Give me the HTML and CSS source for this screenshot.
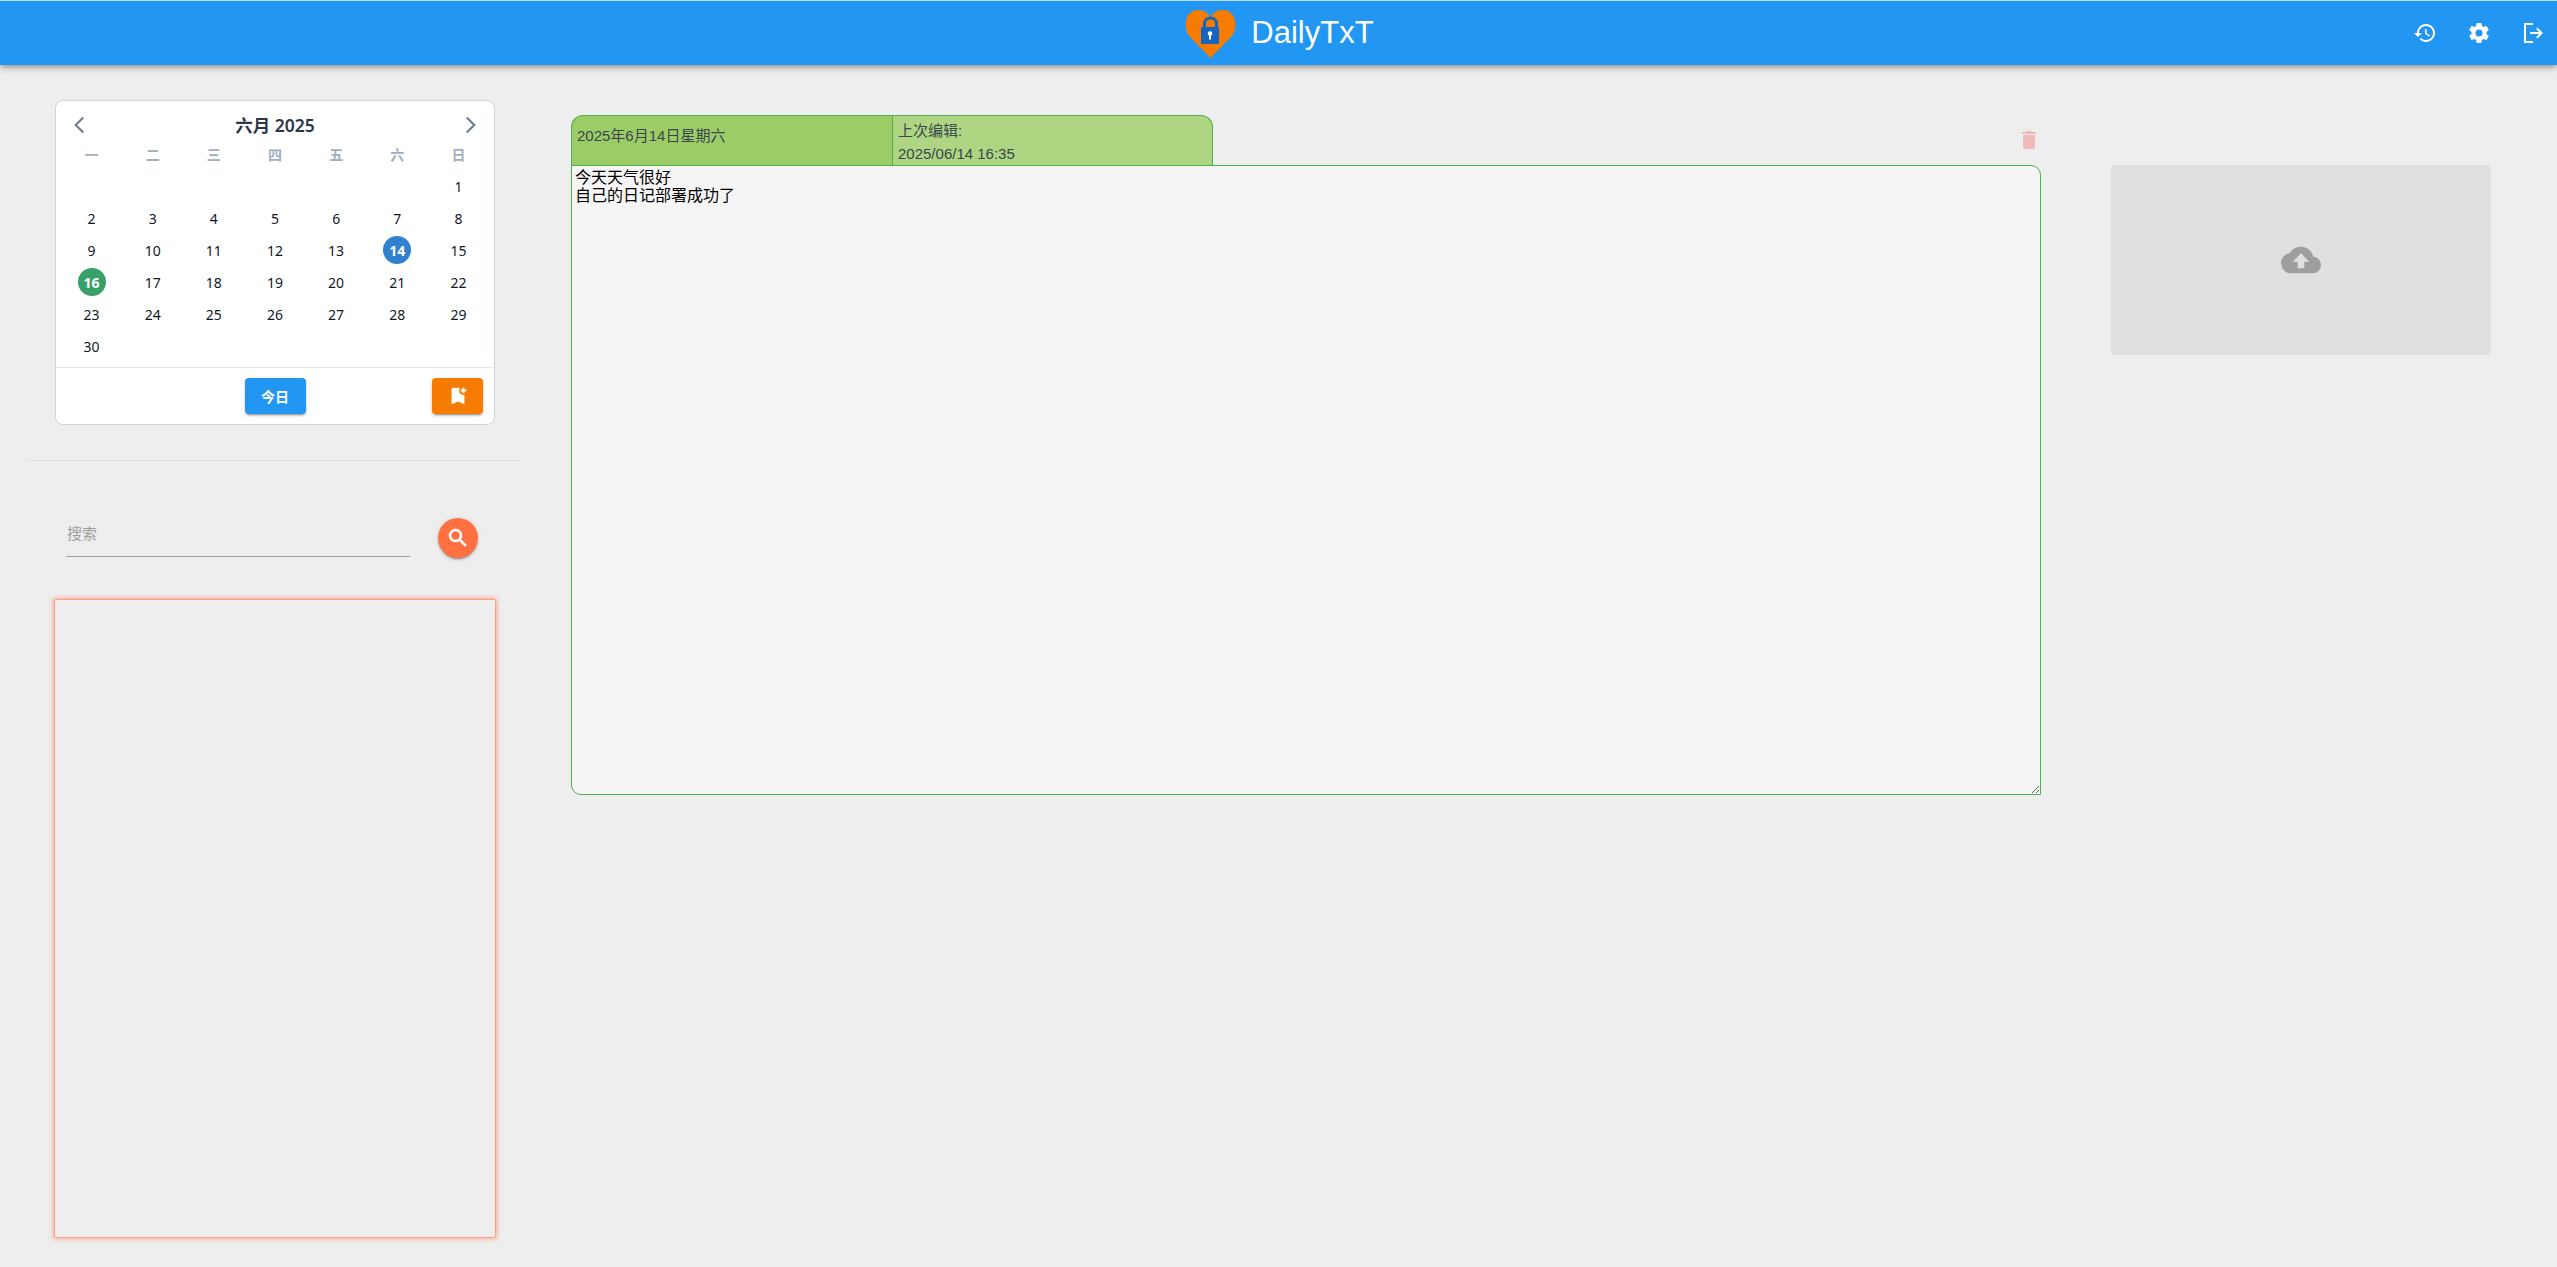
FILE: index.html
```html
<!DOCTYPE html>
<html lang="zh">
<head>
<meta charset="utf-8">
<title>DailyTxT</title>
<link rel="stylesheet" href="styles.css">
</head>
<body>
<header class="topbar">
  <div></div>
  <div class="brand">
    <svg class="logo" viewBox="0 0 51 48" aria-hidden="true">
      <path class="logo-heart" d="M25.500 48L4.500 26.500C-2.500 18 -0.500 0 13.500 0C19 0 23 2.800 25.500 7C28 2.800 32 0 37.500 0C51.500 0 53.500 18 46.500 26.500Z"/>
      <path class="logo-shackle" d="M19.500 18V13.500C19.500 6 31.500 6 31.500 13.500V18"/>
      <rect class="logo-body" x="16" y="17" width="18" height="17" rx="1"/>
      <circle class="logo-key" cx="25" cy="23.500" r="2.300"/>
      <rect class="logo-key" x="24" y="24" width="2" height="5.500"/>
    </svg>
    <span class="brand-name">DailyTxT</span>
  </div>
  <nav class="actions">
    <button class="icon-btn"><svg viewBox="0 0 24 24"><path d="M13 3c-4.970 0-9 4.030-9 9H1l3.890 3.890.070.140L9 12H6c0-3.870 3.130-7 7-7s7 3.130 7 7-3.130 7-7 7c-1.930 0-3.680-.790-4.940-2.060l-1.420 1.420C8.270 19.990 10.510 21 13 21c4.970 0 9-4.030 9-9s-4.030-9-9-9zm-1 5v5l4.280 2.540.720-1.210-3.500-2.080V8H12z"/></svg></button>
    <button class="icon-btn"><svg viewBox="0 0 24 24"><path d="M12,15.500A3.500,3.500 0 0,1 8.500,12A3.500,3.500 0 0,1 12,8.500A3.500,3.500 0 0,1 15.500,12A3.500,3.500 0 0,1 12,15.500M19.430,12.970C19.470,12.650 19.500,12.330 19.500,12C19.500,11.670 19.470,11.340 19.430,11L21.540,9.370C21.730,9.220 21.780,8.950 21.660,8.730L19.660,5.270C19.540,5.050 19.270,4.960 19.050,5.050L16.560,6.050C16.040,5.660 15.500,5.320 14.870,5.070L14.500,2.420C14.460,2.180 14.250,2 14,2H10C9.750,2 9.540,2.180 9.500,2.420L9.130,5.070C8.500,5.320 7.960,5.660 7.440,6.050L4.950,5.050C4.730,4.960 4.460,5.050 4.340,5.270L2.340,8.730C2.210,8.950 2.270,9.220 2.460,9.370L4.570,11C4.530,11.340 4.500,11.670 4.500,12C4.500,12.330 4.530,12.650 4.570,12.970L2.460,14.630C2.270,14.780 2.210,15.050 2.340,15.270L4.340,18.730C4.460,18.950 4.730,19.030 4.950,18.950L7.440,17.940C7.960,18.340 8.500,18.680 9.130,18.930L9.500,21.580C9.540,21.820 9.750,22 10,22H14C14.250,22 14.460,21.820 14.500,21.580L14.870,18.930C15.500,18.670 16.040,18.340 16.560,17.940L19.050,18.950C19.270,19.030 19.540,18.950 19.660,18.730L21.660,15.270C21.780,15.050 21.730,14.780 21.540,14.630L19.430,12.970Z"/></svg></button>
    <button class="icon-btn"><svg viewBox="0 0 24 24"><path d="M3 2h9v2H5v16h7v2H3zM16.500 6.500l-1.400 1.400 3.100 3.100H9v2h9.200l-3.100 3.100 1.400 1.400 5.500-5.500z"/></svg></button>
  </nav>
</header>

<main class="layout">
  <aside class="left">
    <section class="calendar">
      <div class="cal-head">
        <svg class="chevron" viewBox="0 0 12 16"><path d="M9 2L3 8l6 6"/></svg>
        <span class="cal-title">六月 2025</span>
        <svg class="chevron" viewBox="0 0 12 16"><path d="M3 2l6 6-6 6"/></svg>
      </div>
      <div class="cal-weekdays">
        <span>一</span><span>二</span><span>三</span><span>四</span><span>五</span><span>六</span><span>日</span>
      </div>
      <div class="cal-days">
        <span></span><span></span><span></span><span></span><span></span><span></span><span>1</span>
        <span>2</span><span>3</span><span>4</span><span>5</span><span>6</span><span>7</span><span>8</span>
        <span>9</span><span>10</span><span>11</span><span>12</span><span>13</span><span><b class="mark mark-selected">14</b></span><span>15</span>
        <span><b class="mark mark-today">16</b></span><span>17</span><span>18</span><span>19</span><span>20</span><span>21</span><span>22</span>
        <span>23</span><span>24</span><span>25</span><span>26</span><span>27</span><span>28</span><span>29</span>
        <span>30</span>
      </div>
      <div class="cal-foot">
        <button class="btn btn-today">今日</button>
        <button class="btn btn-bookmark"><svg viewBox="0 0 24 24"><path d="M21 7h-2v2h-2V7h-2V5h2V3h2v2h2v2zm-2 14-7-3-7 3V5c0-1.100.9-2 2-2h7a5.002 5.002 0 0 0 5 7.900V21z"/></svg></button>
      </div>
    </section>
    <hr class="divider">
    <div class="search">
      <input class="search-input" type="text" placeholder="搜索">
      <button class="search-btn"><svg viewBox="0 0 24 24"><path d="M9.500,3A6.500,6.500 0 0,1 16,9.500C16,11.110 15.410,12.590 14.440,13.730L14.710,14H15.500L20.500,19L19,20.500L14,15.500V14.710L13.730,14.440C12.590,15.410 11.110,16 9.500,16A6.500,6.500 0 0,1 3,9.500A6.500,6.500 0 0,1 9.500,3M9.500,5C7,5 5,7 5,9.500C5,12 7,14 9.500,14C12,14 14,12 14,9.500C14,7 12,5 9.500,5Z"/></svg></button>
    </div>
    <div class="results"></div>
  </aside>

  <section class="editor">
    <div class="editor-top">
      <div class="tabs">
        <div class="tab tab-date">2025年6月14日星期六</div>
        <div class="tab tab-edit"><span>上次编辑:</span><span>2025/06/14 16:35</span></div>
      </div>
      <svg class="trash" viewBox="0 0 24 24"><path d="M19,4H15.500L14.500,3H9.500L8.500,4H5V6H19M6,19A2,2 0 0,0 8,21H16A2,2 0 0,0 18,19V7H6V19Z"/></svg>
    </div>
    <textarea class="entry">今天天气很好
自己的日记部署成功了</textarea>
  </section>

  <aside class="right">
    <div class="upload"><svg viewBox="0 0 24 24"><path d="M14,13V17H10V13H7L12,8L17,13M19.350,10.030C18.670,6.590 15.640,4 12,4C9.110,4 6.600,5.590 5.150,7.960C2.100,8.360 0,10.900 0,14A6,6 0 0,0 6,20H19A5,5 0 0,0 24,15C24,12.360 21.950,10.220 19.350,10.030Z"/></svg></div>
  </aside>
</main>
</body>
</html>
```

FILE: styles.css
```css
* { box-sizing: border-box; }
html, body { height: 100%; }
body {
  margin: 0;
  background: #eeeeee;
  font-family: "Liberation Sans", "Noto Sans CJK SC", sans-serif;
  overflow: hidden;
}
button { border: 0; padding: 0; cursor: pointer; }

.topbar {
  height: 65px;
  border-top: 1px solid #bbdefb;
  background: #2196f3;
  display: grid;
  grid-template-columns: 1fr auto 1fr;
  align-items: center;
  box-shadow: 0 2px 4px -1px rgba(0,0,0,.2), 0 4px 5px 0 rgba(0,0,0,.14), 0 1px 10px 0 rgba(0,0,0,.12);
  position: relative;
}
.brand { display: flex; align-items: center; gap: 15px; padding-left: 2px; }
.logo { width: 51px; height: 48px; display: block; margin-top: 1px; }
.logo-heart { fill: #f57c00; }
.logo-shackle { fill: none; stroke: #1565c0; stroke-width: 3; }
.logo-body { fill: #1565c0; }
.logo-key { fill: #fff; }
.brand-name { color: #fff; font-size: 31px; line-height: 40px; }
.actions { display: flex; justify-content: flex-end; gap: 6px; }
.icon-btn { width: 48px; height: 48px; background: none; display: flex; align-items: center; justify-content: center; }
.icon-btn svg { width: 24px; height: 24px; fill: #fff; }

.layout { display: flex; align-items: flex-start; }

.left { width: 492px; margin-left: 28px; }
.calendar {
  width: 440px;
  height: 325px;
  margin: 35px 0 0 27px;
  background: #fff;
  border: 1px solid #cbd5e0;
  border-radius: 8px;
  font-family: "Noto Sans", "Noto Sans CJK SC", sans-serif;
}
.cal-head {
  height: 41px;
  margin-top: 3px;
  padding: 0 16px;
  display: flex;
  align-items: center;
  justify-content: space-between;
}
.chevron { width: 15px; height: 20px; fill: none; stroke: #718096; stroke-width: 1.800; }
.cal-title { font-size: 17.500px; font-weight: 600; color: #2d3748; }
.cal-weekdays, .cal-days {
  display: grid;
  grid-template-columns: repeat(7, 1fr);
  padding: 0 5px;
  text-align: center;
}
.cal-weekdays { height: 20px; line-height: 20px; font-size: 14px; font-weight: 700; color: #a0aec0; }
.cal-days { grid-auto-rows: 32px; margin-top: 5px; height: 197px; font-size: 14px; font-weight: 400; color: #111827; }
.cal-days span { display: flex; align-items: center; justify-content: center; }
.mark { width: 28px; height: 28px; border-radius: 50%; color: #fff; display: flex; align-items: center; justify-content: center; font-weight: 700; }
.mark-selected { background: #3182ce; }
.mark-today { background: #38a169; }
.cal-foot {
  border-top: 1px solid #e2e8f0;
  padding: 10px 11px 9px;
  display: grid;
  grid-template-columns: 1fr 61px 1fr;
  align-items: center;
}
.btn { height: 36px; border-radius: 4px; color: #fff; box-shadow: 0 3px 1px -2px rgba(0,0,0,.2), 0 2px 2px 0 rgba(0,0,0,.14), 0 1px 5px 0 rgba(0,0,0,.12); }
.btn-today { grid-column: 2; background: #2196f3; font: 700 14px "Noto Sans CJK SC", sans-serif; }
.btn-bookmark { grid-column: 3; justify-self: end; width: 51px; background: #f57c00; display: flex; align-items: center; justify-content: center; }
.btn-bookmark svg { width: 22px; height: 22px; fill: #fff; }

.divider { margin: 35px 0 0; border: 0; border-top: 1px solid #e0e0e0; }
.search { display: flex; gap: 28px; margin: 57px 0 0 38px; height: 40px; }
.search-input {
  width: 344px;
  height: 39px;
  padding: 0 0 9px 1px;
  background: none;
  border: 0;
  border-bottom: 1px solid #9e9e9e;
  outline: none;
  font: 15px "Noto Sans CJK SC", sans-serif;
}
.search-input::placeholder { color: #9e9e9e; }
.search-btn {
  width: 40px;
  height: 40px;
  border-radius: 50%;
  background: #ff7043;
  display: flex;
  align-items: center;
  justify-content: center;
  box-shadow: 0 3px 1px -2px rgba(0,0,0,.2), 0 2px 2px 0 rgba(0,0,0,.14), 0 1px 5px 0 rgba(0,0,0,.12);
}
.search-btn svg { width: 24px; height: 24px; fill: #fff; stroke: #fff; stroke-width: .6; }
.results {
  width: 442px;
  height: 639px;
  margin: 41px 0 0 26px;
  border: 1px solid #ff9e80;
  border-radius: 2px;
  box-shadow: 0 0 4px 1px rgba(255,112,67,.55);
}

.editor { width: 1470px; margin-left: 51px; }
.editor-top { display: flex; justify-content: space-between; height: 100px; padding-top: 50px; }
.tabs { display: flex; height: 50px; }
.tab {
  width: 321px;
  padding: 0 5px;
  border: 1px solid #4caf50;
  border-bottom: 0;
  color: #37474f;
  font-size: 15px;
}
.tab-date {
  background: #9ccc65;
  border-radius: 12px 0 0 0;
  border-right: 0;
  line-height: 39px;
}
.tab-edit {
  background: #aed581;
  border-radius: 0 12px 0 0;
  display: flex;
  flex-direction: column;
  gap: 7px;
  padding-top: 7px;
}
.tab-edit span { line-height: 16px; }
.trash { width: 24px; height: 24px; fill: #f0baba; margin-top: 13px; }
.entry {
  display: block;
  width: 1470px;
  height: 630px;
  margin: 0;
  padding: 3px 3px 2px;
  background: #f5f5f5;
  border: 1px solid #4caf50;
  border-radius: 0 10px 0 10px;
  outline: none;
  color: #000;
  font: 16px/18px "Liberation Sans", "Noto Sans CJK SC", sans-serif;
}

.right { margin: 100px 0 0 70px; }
.upload {
  width: 380px;
  height: 190px;
  background: #e0e0e0;
  border-radius: 4px;
  display: flex;
  align-items: center;
  justify-content: center;
}
.upload svg { width: 40px; height: 40px; fill: #9e9e9e; }
```
